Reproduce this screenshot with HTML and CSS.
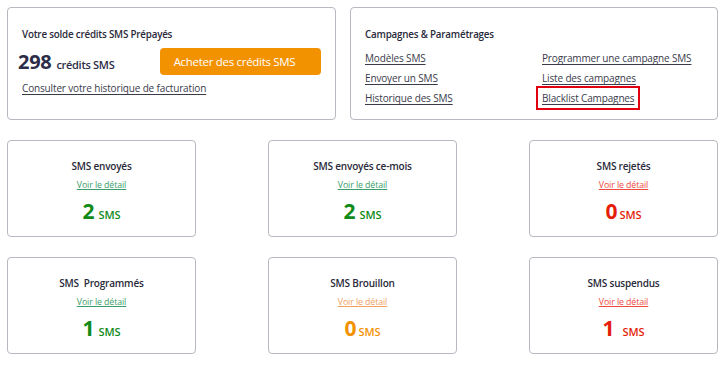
FILE: index.html
```html
<!DOCTYPE html>
<html lang="fr">
<head>
<meta charset="utf-8">
<title>SMS</title>
<link rel="stylesheet" href="styles.css">
</head>
<body>
<div class="page">
  <div class="top-row">
    <section class="card balance">
      <h2 class="card-title">Votre solde crédits SMS Prépayés</h2>
      <div class="balance-row">
        <div class="balance-amount"><span class="big">298</span> <span class="unit">crédits SMS</span></div>
        <a class="buy-btn" href="#">Acheter des crédits SMS</a>
      </div>
      <a class="link" href="#">Consulter votre historique de facturation</a>
    </section>
    <section class="card campaigns">
      <h2 class="card-title">Campagnes &amp; Paramétrages</h2>
      <div class="link-grid">
        <a class="link" href="#">Modèles SMS</a>
        <a class="link" href="#">Programmer une campagne SMS</a>
        <a class="link" href="#">Envoyer un SMS</a>
        <a class="link" href="#">Liste des campagnes</a>
        <a class="link" href="#">Historique des SMS</a>
        <span class="highlight"><a class="link" href="#">Blacklist Campagnes</a></span>
      </div>
    </section>
  </div>

  <div class="stats-row">
    <div class="card stat">
      <div class="stat-title">SMS envoyés</div>
      <a class="detail green" href="#">Voir le détail</a>
      <div class="stat-value green"><span class="num">2</span><span class="sms">SMS</span></div>
    </div>
    <div class="card stat">
      <div class="stat-title">SMS envoyés ce-mois</div>
      <a class="detail green" href="#">Voir le détail</a>
      <div class="stat-value green"><span class="num">2</span><span class="sms">SMS</span></div>
    </div>
    <div class="card stat">
      <div class="stat-title">SMS rejetés</div>
      <a class="detail red" href="#">Voir le détail</a>
      <div class="stat-value red"><span class="num">0</span><span class="sms tight">SMS</span></div>
    </div>
  </div>

  <div class="stats-row">
    <div class="card stat">
      <div class="stat-title">SMS&nbsp; Programmés</div>
      <a class="detail green" href="#">Voir le détail</a>
      <div class="stat-value green"><span class="num">1</span><span class="sms">SMS</span></div>
    </div>
    <div class="card stat">
      <div class="stat-title">SMS Brouillon</div>
      <a class="detail orange" href="#">Voir le détail</a>
      <div class="stat-value orange"><span class="num">0</span><span class="sms tight">SMS</span></div>
    </div>
    <div class="card stat">
      <div class="stat-title">SMS suspendus</div>
      <a class="detail red" href="#">Voir le détail</a>
      <div class="stat-value red"><span class="num">1</span><span class="sms wide">SMS</span></div>
    </div>
  </div>
</div>
</body>
</html>
```

FILE: styles.css
```css
* { box-sizing: border-box; }
html, body { margin: 0; padding: 0; background: #fff; }
body {
  font-family: "Open Sans", "Noto Sans", sans-serif;
  color: #2a2a3a;
  font-size: 10px;
}
.page {
  padding: 7px 9px 0 7px;
  width: 727px;
}
.card {
  border: 1px solid #b8b8c0;
  border-radius: 4px;
  background: #fff;
}
.top-row {
  display: grid;
  grid-template-columns: 329px 368px;
  column-gap: 14px;
}
.balance, .campaigns {
  height: 113px;
}
.balance { padding: 20px 14px 0 14px; }
.campaigns { padding: 20px 14px 0 14px; }
.card-title {
  margin: 0;
  font-size: 9.8px;
  font-weight: 600;
  color: #2a2a3a;
  line-height: 14px;
  letter-spacing: -0.2px;
}
.balance-row {
  display: flex;
  align-items: center;
  margin-top: 5px;
  height: 29px;
}
.balance-amount {
  margin-left: -4px;
  width: 142px;
  white-space: nowrap;
  display: flex;
  align-items: baseline;
  gap: 5px;
}
.big {
  font-size: 20px;
  font-weight: 700;
  color: #2c2c48;
  letter-spacing: -0.3px;
}
.unit {
  font-size: 11px;
  font-weight: 600;
  color: #2c2c48;
  letter-spacing: -0.3px;
}
.buy-btn {
  display: flex;
  align-items: center;
  justify-content: center;
  width: 161px;
  height: 27px;
  background: #f39200;
  color: #fff;
  border-radius: 4px;
  font-size: 11.5px;
  text-decoration: none;
  letter-spacing: -0.3px;
  padding-right: 12px;
}
.balance > .link {
  display: inline-block;
  margin-top: 5px;
}
.link {
  color: #3a3a4a;
  font-size: 10px;
  text-decoration: underline;
  text-underline-offset: 2px;
  letter-spacing: -0.15px;
  line-height: 14px;
}
.link-grid {
  display: grid;
  grid-template-columns: 177px auto;
  row-gap: 6px;
  margin-top: 9px;
  align-items: start;
}
.highlight {
  justify-self: start;
  border: 2px solid #e0000f;
  margin: -5px 0 0 -6px;
  padding: 3px 4px 3px 4px;
  line-height: 14px;
}
.stats-row {
  display: flex;
  justify-content: space-between;
  margin-top: 20px;
}
.stat {
  width: 189px;
  height: 97px;
  display: flex;
  flex-direction: column;
  align-items: center;
  padding-top: 18px;
}
.stat-title {
  font-size: 10px;
  font-weight: 600;
  line-height: 14px;
  color: #2a2a3a;
  letter-spacing: -0.2px;
}
.detail {
  margin-top: 6px;
  font-size: 8.8px;
  line-height: 12px;
  text-decoration: underline;
  letter-spacing: -0.1px;
}
.detail.green { color: #3b9d6a; }
.detail.red { color: #ee4a40; }
.detail.orange { color: #f0a060; }
.stat-value {
  margin-top: 6px;
  display: flex;
  align-items: baseline;
  gap: 4px;
}
.num {
  font-size: 21px;
  font-weight: 700;
  line-height: 28px;
}
.sms {
  font-size: 11px;
  font-weight: 600;
}
.sms.tight { margin-left: -2px; }
.sms.wide { margin-left: 4px; }
.stat-value.green { color: #118a18; }
.stat-value.red { color: #e41e0a; }
.stat-value.orange { color: #f39200; }
```
